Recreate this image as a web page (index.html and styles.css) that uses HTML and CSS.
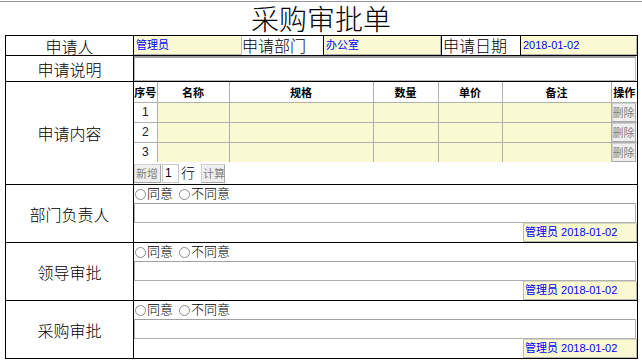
FILE: index.html
```html
<!DOCTYPE html>
<html lang="zh-CN">
  <head>
    <meta charset="UTF-8" />
    <meta name="viewport" content="width=device-width, initial-scale=1.0" />
    <title>采购审批单</title>
    <link rel="stylesheet" href="styles.css">
  </head>
  <body>
    <div class="topline"></div>
    <h1 class="title">采购审批单</h1>

    <table class="form">
      <colgroup>
        <col class="col-label">
        <col>
      </colgroup>

      <!-- applicant / department / date -->
      <tr>
        <td class="label">申请人</td>
        <td class="content">
          <div class="head-fields">
            <div class="field field-user">管理员</div>
            <div class="sub-label sub-dept">申请部门</div>
            <div class="field field-dept">办公室</div>
            <div class="sub-label sub-date">申请日期</div>
            <div class="field field-date">2018-01-02</div>
          </div>
        </td>
      </tr>

      <tr>
        <td class="label">申请说明</td>
        <td class="content">
          <div class="desc-box"></div>
        </td>
      </tr>

      <!-- purchase lines -->
      <tr>
        <td class="label">申请内容</td>
        <td class="content">
          <table class="items">
            <colgroup>
              <col class="c-no">
              <col class="c-name">
              <col class="c-spec">
              <col class="c-qty">
              <col class="c-price">
              <col class="c-note">
              <col class="c-op">
            </colgroup>
            <tr class="items-head">
              <th>序号</th>
              <th>名称</th>
              <th>规格</th>
              <th>数量</th>
              <th>单价</th>
              <th>备注</th>
              <th>操作</th>
            </tr>
            <tr>
              <td class="no">1</td>
              <td class="fill"></td>
              <td class="fill"></td>
              <td class="fill"></td>
              <td class="fill"></td>
              <td class="fill fill-note"></td>
              <td class="op"><span class="btn">删除</span></td>
            </tr>
            <tr>
              <td class="no">2</td>
              <td class="fill"></td>
              <td class="fill"></td>
              <td class="fill"></td>
              <td class="fill"></td>
              <td class="fill fill-note"></td>
              <td class="op"><span class="btn">删除</span></td>
            </tr>
            <tr>
              <td class="no">3</td>
              <td class="fill"></td>
              <td class="fill"></td>
              <td class="fill"></td>
              <td class="fill"></td>
              <td class="fill fill-note"></td>
              <td class="op"><span class="btn">删除</span></td>
            </tr>
          </table>
          <div class="items-tools">
            <span class="btn btn-add">新增</span>
            <span class="count">1</span>
            <span class="unit">行</span>
            <span class="btn btn-calc">计算</span>
          </div>
        </td>
      </tr>

      <!-- approvals -->
      <tr>
        <td class="label">部门负责人</td>
        <td class="content">
          <div class="opinion">
            <div class="choices">
              <span class="choice"><span class="radio"></span>同意</span>
              <span class="choice"><span class="radio"></span>不同意</span>
            </div>
            <div class="comment"></div>
            <div class="sign"><span class="sign-box">管理员 2018-01-02</span></div>
          </div>
        </td>
      </tr>

      <tr>
        <td class="label">领导审批</td>
        <td class="content">
          <div class="opinion">
            <div class="choices">
              <span class="choice"><span class="radio"></span>同意</span>
              <span class="choice"><span class="radio"></span>不同意</span>
            </div>
            <div class="comment"></div>
            <div class="sign"><span class="sign-box">管理员 2018-01-02</span></div>
          </div>
        </td>
      </tr>

      <tr>
        <td class="label">采购审批</td>
        <td class="content">
          <div class="opinion">
            <div class="choices">
              <span class="choice"><span class="radio"></span>同意</span>
              <span class="choice"><span class="radio"></span>不同意</span>
            </div>
            <div class="comment"></div>
            <div class="sign"><span class="sign-box">管理员 2018-01-02</span></div>
          </div>
        </td>
      </tr>
    </table>
  </body>
</html>
```

FILE: styles.css
```css
body {
  margin: 0;
  padding: 0 5px;
  font-family: "Liberation Sans", "Noto Sans CJK SC", sans-serif;
  color: #000;
  background: #fff;
}

.topline {
  height: 1px;
  margin: 1px -5px 0;
  background: #999;
}

.title {
  margin: 0;
  height: 33px;
  font-family: "Noto Sans CJK SC", sans-serif;
  font-size: 28px;
  font-weight: 300;
  line-height: 33px;
  text-align: center;
}

/* main form table */
.form {
  width: 633px;
  border-collapse: collapse;
  table-layout: fixed;
}

.form > tbody > tr > td {
  border: 1px solid #000;
  padding: 0;
}

.col-label {
  width: 128px;
}

.label {
  font-family: "Noto Sans CJK SC", sans-serif;
  font-size: 16px;
  font-weight: 300;
  line-height: 18px;
  text-align: center;
  vertical-align: middle;
}

.content {
  vertical-align: top;
  line-height: 16px;
}

.head-fields {
  display: flex;
  height: 19px;
}

.field {
  box-sizing: border-box;
  height: 19px;
  padding-left: 1px;
  background: #fafad2;
  border: 1px solid #b8b8b8;
  border-left-color: #fafad2;
  border-top-color: #fafad2;
  color: #00f;
  font-size: 11px;
  line-height: 17px;
}

.field-user {
  width: 108px;
}

.field-dept {
  width: 117px;
}

.field-date {
  flex: 1;
}

.sub-label {
  box-sizing: border-box;
  height: 19px;
  font-family: "Noto Sans CJK SC", sans-serif;
  font-size: 16px;
  font-weight: 300;
  line-height: 18px;
  white-space: nowrap;
}

.sub-dept {
  width: 82px;
  border-right: 1px solid #000;
}

.sub-date {
  width: 80px;
  padding-left: 1px;
  border: 1px solid #000;
  border-top: none;
  border-bottom: none;
}

.desc-box {
  box-sizing: border-box;
  height: 25px;
  margin: 0 1px 0 0;
  border: 1px solid #b8b8b8;
  border-top: 2px solid #a0a0a0;
}

/* purchase lines */
.items {
  width: 100%;
  border-collapse: collapse;
  table-layout: fixed;
  border-style: hidden;
}

.items th,
.items td {
  box-sizing: border-box;
  border: 1px solid #b0b0b0;
  padding: 0;
  height: 20px;
  line-height: 18px;
}

.c-no { width: 23px; }
.c-name { width: 72px; }
.c-spec { width: 144px; }
.c-qty { width: 65px; }
.c-price { width: 64px; }
.c-note { width: 109px; }

.items th {
  font-family: "Noto Sans CJK SC", sans-serif;
  font-size: 11px;
  font-weight: bold;
  white-space: nowrap;
  overflow: hidden;
}

.items-head th {
  border-top: 2px solid #666;
}

.no {
  font-size: 12px;
  text-align: center;
  color: #222;
}

.fill {
  background: #fafad2;
}

.items td.fill-note {
  border-left-color: #fafad2;
}

.op {
  background: #fff;
}

.btn {
  display: inline-block;
  box-sizing: border-box;
  height: 19px;
  padding: 0 1px;
  background: #efefef;
  border: 1px solid #d0d0d0;
  border-right-color: #a8a8a8;
  border-bottom-color: #a8a8a8;
  color: #808080;
  font-family: "Noto Sans CJK SC", sans-serif;
  font-size: 11px;
  line-height: 17px;
  vertical-align: top;
  white-space: nowrap;
}

.op .btn {
  display: block;
  width: 24px;
  padding: 0;
  overflow: hidden;
}

.items-tools {
  display: flex;
  height: 20px;
  margin-top: 2px;
}

.btn-add {
  width: 27px;
}

.count {
  box-sizing: border-box;
  width: 17px;
  height: 19px;
  margin-left: 1px;
  padding-left: 2px;
  border: 1px solid #c8c8c8;
  font-size: 12px;
  line-height: 17px;
}

.unit {
  width: 20px;
  padding-left: 2px;
  font-family: "Noto Sans CJK SC", sans-serif;
  font-size: 14px;
  font-weight: 300;
  line-height: 17px;
}

.btn-calc {
  width: 24px;
}

/* approval rows */
.opinion {
  height: 57px;
}

.choices {
  display: flex;
  height: 18px;
  font-family: "Noto Sans CJK SC", sans-serif;
  font-size: 13px;
  font-weight: 300;
  line-height: 16px;
}

.choice {
  display: flex;
  align-items: center;
  height: 16px;
  margin-right: 5px;
}

.radio {
  box-sizing: border-box;
  width: 11px;
  height: 11px;
  margin: 2px 1px 0 1px;
  border: 1px solid #8c8c8c;
  border-radius: 50%;
  background: #fff;
}

.comment {
  box-sizing: border-box;
  height: 20px;
  margin-right: 1px;
  border: 1px solid #b0b0b0;
  border-top-color: #a0a0a0;
}

.sign {
  display: flex;
  justify-content: flex-end;
  height: 19px;
}

.sign-box {
  box-sizing: border-box;
  width: 114px;
  height: 19px;
  padding-left: 1px;
  background: #fafad2;
  border: 1px solid #b8b8b8;
  border-top-color: #d8d8c0;
  color: #00f;
  font-size: 11px;
  line-height: 17px;
  white-space: nowrap;
}
```
